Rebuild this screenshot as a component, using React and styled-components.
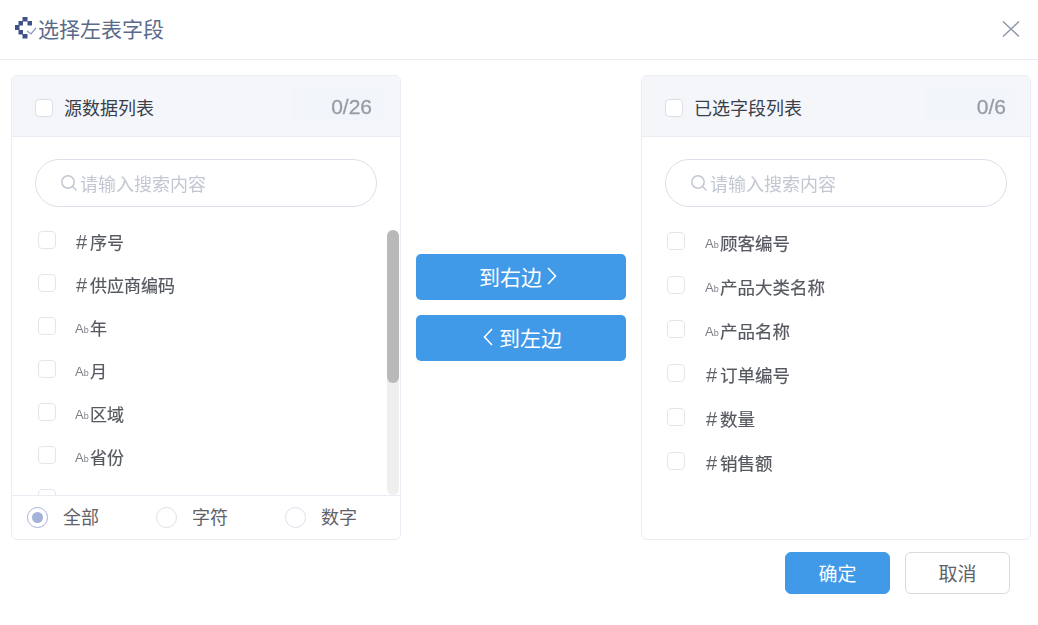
import React from 'react';
import styled, { createGlobalStyle } from 'styled-components';

const GlobalStyle = createGlobalStyle`
  html, body { margin: 0; padding: 0; background: #fff; }
  body { font-family: "Noto Sans CJK SC", "Liberation Sans", sans-serif; }
`;

const Dialog = styled.div`
  width: 1038px;
  height: 625px;
  display: flex;
  flex-direction: column;
  overflow: hidden;
`;

const Header = styled.header`
  height: 59px;
  border-bottom: 1px solid #e9ebf0;
  display: flex;
  align-items: center;
  justify-content: space-between;
  padding: 0 18px 0 14px;
  flex: none;
`;

const Title = styled.h1`
  margin: 0 0 4px;
  display: flex;
  align-items: center;
  font-size: 21px;
  line-height: 30px;
  font-weight: 400;
  color: #5a6a8a;
`;

const LogoMark = styled.svg`
  display: block;
  margin-top: -1px;
`;

const CloseButton = styled.button`
  border: 0;
  padding: 0;
  background: none;
  width: 20px;
  height: 20px;
  display: flex;
`;

const Body = styled.main`
  display: flex;
  padding: 15px 7px 0 11px;
  height: 465px;
  flex: none;
`;

const Panel = styled.section`
  position: relative;
  width: 390px;
  height: 465px;
  box-sizing: border-box;
  border: 1px solid #eaedf3;
  border-radius: 6px;
  display: flex;
  flex-direction: column;
  flex: none;
  overflow: hidden;
`;

const PanelHead = styled.div`
  height: 61px;
  flex: none;
  box-sizing: border-box;
  background: #f4f6fa;
  border-bottom: 1px solid #eaedf3;
  display: flex;
  align-items: center;
  padding: 4px ${props => props.$right}px 0 23px;
`;

const Box = styled.span`
  width: 18px;
  height: 18px;
  box-sizing: border-box;
  background: #fff;
  border: 1px solid ${props => (props.$soft ? '#e3e5eb' : '#dcdfe8')};
  border-radius: 4px;
  flex: none;
`;

const HeadLabel = styled.span`
  margin: 0 0 2px 11px;
  font-size: 18px;
  line-height: 26px;
  color: #3a3f4b;
  flex: 1;
`;

const Count = styled.span`
  align-self: flex-start;
  margin-top: 7px;
  height: 35px;
  min-width: 92px;
  box-sizing: border-box;
  padding: 4px 11px 0 0;
  text-align: right;
  font-size: 21px;
  line-height: 31px;
  background: #f2f5f9;
  color: #979ba3;
  font-family: "Liberation Sans", sans-serif;
`;

const CountText = styled.span`
  display: inline-block;
  -webkit-text-stroke: 0.3px #979ba3;
  filter: blur(0.35px);
`;

const Search = styled.div`
  margin: 22px 23px 0;
  height: 48px;
  flex: none;
  box-sizing: border-box;
  border: 1px solid #dcdfe8;
  border-radius: 24px;
  display: flex;
  align-items: center;
  padding-left: 24px;
  color: #c2c7d2;
  font-size: 18px;
`;

const SearchHint = styled.span`
  display: flex;
  align-items: center;
  gap: 2px;
  padding-bottom: 1px;
  filter: blur(0.3px);
`;

const List = styled.ul`
  list-style: none;
  margin: ${props => (props.$roomy ? 12 : 11)}px 0 0;
  padding: 0 0 0 ${props => (props.$roomy ? 25 : 26)}px;
  flex: 1;
  min-height: 0;
  overflow: hidden;
  filter: blur(0.4px);
`;

const Row = styled.li`
  height: ${props => (props.$roomy ? 44 : 43)}px;
  display: flex;
  align-items: center;
  font-size: ${props => (props.$roomy ? 17.5 : 17)}px;
  color: #55585f;
`;

const RowIcon = styled.span`
  width: 15px;
  margin: ${props => (props.$hash ? 4 : 7)}px 0 0 ${props => (props.$roomy ? 20 : 19)}px;
  flex: none;
  display: flex;
  align-items: baseline;
  font-family: "Liberation Sans", sans-serif;
  font-size: ${props => (props.$hash ? 20 : 13)}px;
  line-height: 20px;
  color: ${props => (props.$hash ? '#5f6269' : '#7c7f86')};
  box-sizing: border-box;
  padding-left: ${props => (props.$hash ? 1 : 0)}px;
`;

const Small = styled.span`
  font-size: 9px;
`;

const RowText = styled.span`
  margin-top: ${props => (props.$roomy ? 2 : 4)}px;
  -webkit-text-stroke: 0.2px #55585f;
`;

const Track = styled.div`
  position: absolute;
  right: 1px;
  top: 154px;
  width: 12px;
  height: 265px;
  background: #efefef;
  border-radius: 6px;
`;

const Thumb = styled.div`
  height: 153px;
  background: #b9b9b9;
  border-radius: 6px;
`;

const Filters = styled.div`
  height: 44px;
  box-sizing: border-box;
  flex: none;
  border-top: 1px solid #eaedf3;
  display: flex;
  align-items: center;
  padding-left: 15px;
`;

const Filter = styled.label`
  width: 129px;
  flex: none;
  box-sizing: border-box;
  padding-bottom: 3px;
  display: flex;
  align-items: center;
  gap: 15px;
  font-size: 18px;
  color: #5f6269;
`;

const Radio = styled.span`
  width: 21px;
  height: 21px;
  margin-top: 3px;
  box-sizing: border-box;
  border: 1px solid ${props => (props.$on ? '#a4b2d8' : '#dcdfe8')};
  border-radius: 50%;
  display: flex;
  align-items: center;
  justify-content: center;

  &::after {
    content: '';
    display: ${props => (props.$on ? 'block' : 'none')};
    width: 11px;
    height: 11px;
    border-radius: 50%;
    background: #a4b2d8;
  }
`;

const Middle = styled.div`
  width: 240px;
  flex: none;
  padding: 179px 15px 0;
  box-sizing: border-box;
  display: flex;
  flex-direction: column;
  gap: 15px;
`;

const MoveButton = styled.button`
  height: 46px;
  border: 0;
  border-radius: 5px;
  background: #409ae8;
  color: #fff;
  font: inherit;
  font-size: 21px;
  display: flex;
  align-items: center;
  justify-content: center;
  gap: ${props => (props.$toLeft ? 6 : 5)}px;
  padding: 0 ${props => (props.$toLeft ? 0 : 6)}px 2px ${props => (props.$toLeft ? 3 : 0)}px;
`;

const Footer = styled.footer`
  display: flex;
  justify-content: flex-end;
  gap: 15px;
  padding: 12px 28px 0 0;
`;

const ActionButton = styled.button`
  width: 105px;
  height: 42px;
  box-sizing: border-box;
  padding: 0 0 2px;
  border: 1px solid ${props => (props.$primary ? '#409ae8' : '#d9d9de')};
  border-radius: 6px;
  background: ${props => (props.$primary ? '#409ae8' : '#fff')};
  color: ${props => (props.$primary ? '#fff' : '#5f6269')};
  font: inherit;
  font-size: 19px;
`;

const Chevron = ({ left }) => (
  <svg width="10" height="18" viewBox="0 0 10 18" fill="none" stroke="#fff" strokeWidth="1.6">
    <path d={left ? 'M9 1 1.5 9 9 17' : 'M1 1 8.5 9 1 17'} />
  </svg>
);

const Logo = () => (
  <LogoMark width="24" height="24" viewBox="0 0 24 24">
    <g fill="#3f5286">
      <rect x="8.5" y="2" width="5" height="4.5" />
      <rect x="4.5" y="6" width="4.5" height="4.5" />
      <rect x="1" y="10" width="4.5" height="5" />
      <rect x="4.5" y="15" width="4.5" height="4.5" />
      <rect x="8.5" y="19" width="5" height="4.5" />
      <rect x="13.5" y="6" width="4.5" height="4.5" />
    </g>
    <path d="M13 16 17 19 22 13" fill="none" stroke="#8c9ab8" strokeWidth="1.2" />
  </LogoMark>
);

const SearchIcon = () => (
  <svg width="18" height="18" viewBox="0 0 18 18" fill="none" stroke="#c2c7d2" strokeWidth="1.5">
    <circle cx="8" cy="8" r="6.2" />
    <path d="M12.5 12.5 16.5 16.5" />
  </svg>
);

const Field = ({ name, hash, roomy }) => (
  <Row $roomy={roomy}>
    <Box $soft />
    {name && <RowIcon $hash={hash} $roomy={roomy}>{hash ? '#' : <>A<Small>b</Small></>}</RowIcon>}
    {name && <RowText $roomy={roomy}>{name}</RowText>}
  </Row>
);

// the seventh source row is scrolled almost out of view, only its checkbox shows
const source = [
  ['序号', true], ['供应商编码', true], ['年'], ['月'], ['区域'], ['省份'], [''],
];
const picked = [
  ['顾客编号'], ['产品大类名称'], ['产品名称'], ['订单编号', true], ['数量', true], ['销售额', true],
];

const PanelTop = ({ label, count, right }) => (
  <>
    <PanelHead $right={right}>
      <Box />
      <HeadLabel>{label}</HeadLabel>
      <Count><CountText>{count}</CountText></Count>
    </PanelHead>
    <Search><SearchHint><SearchIcon />请输入搜索内容</SearchHint></Search>
  </>
);

export default function App() {
  return (
    <Dialog>
      <GlobalStyle />
      <Header>
        <Title><Logo />选择左表字段</Title>
        <CloseButton aria-label="关闭">
          <svg width="20" height="20" viewBox="0 0 20 20" stroke="#8d96a8" strokeWidth="1.4">
            <path d="M3 1.5 19 16.5M19 1.5 3 16.5" />
          </svg>
        </CloseButton>
      </Header>
      <Body>
        <Panel>
          <PanelTop label="源数据列表" count="0/26" right={17} />
          <List>
            {source.map(([name, hash]) => <Field key={name} name={name} hash={hash} />)}
          </List>
          <Track><Thumb /></Track>
          <Filters>
            <Filter><Radio $on />全部</Filter>
            <Filter><Radio />字符</Filter>
            <Filter><Radio />数字</Filter>
          </Filters>
        </Panel>
        <Middle>
          <MoveButton>到右边<Chevron /></MoveButton>
          <MoveButton $toLeft><Chevron left />到左边</MoveButton>
        </Middle>
        <Panel>
          <PanelTop label="已选字段列表" count="0/6" right={13} />
          <List $roomy>
            {picked.map(([name, hash]) => <Field key={name} name={name} hash={hash} roomy />)}
          </List>
        </Panel>
      </Body>
      <Footer>
        <ActionButton $primary>确定</ActionButton>
        <ActionButton>取消</ActionButton>
      </Footer>
    </Dialog>
  );
}
